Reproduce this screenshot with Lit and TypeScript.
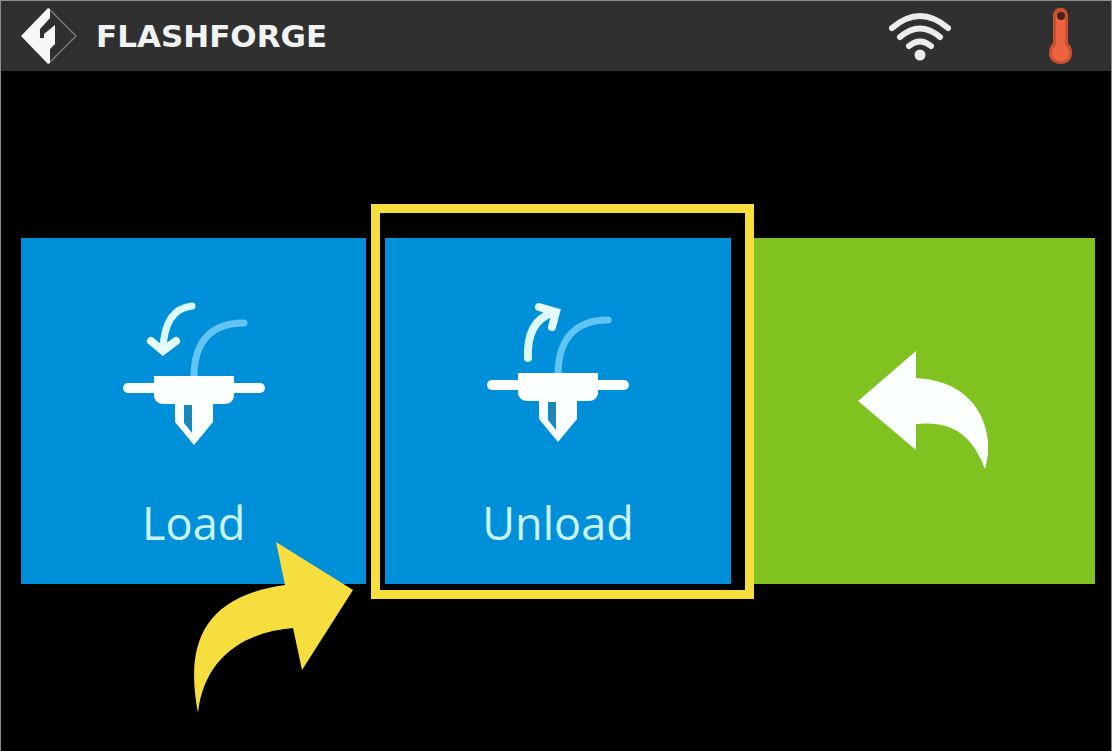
import { LitElement, html, css, svg } from "lit";
import { customElement, property } from "lit/decorators.js";

const nozzle = svg`
  <path d="M6 87H138" stroke="#fbfffe" stroke-width="10" stroke-linecap="round" />
  <path d="M32 75H112V96Q110 103 103 103H41Q34 103 32 96Z" fill="#fbfffe" />
  <path fill-rule="evenodd" fill="#fbfffe"
    d="M53 101H91V121L72 144L53 121ZM62 104V122L70 132V104Z" />
  <path d="M64 104H69V128L64 122Z" fill="#2a83a8" />
`;

const loadIcon = html`
  <svg class="icon" viewBox="0 0 144 144" fill="none" aria-hidden="true">
    <path d="M72 76C72 44 86 22 122 22" stroke="#62c4f4" stroke-width="7" stroke-linecap="round" />
    <path d="M70 5C50 7 42 24 41 48" stroke="#dcfbfc" stroke-width="7" stroke-linecap="round" />
    <path d="M29 40L41 50L54 40" stroke="#e6fdfd" stroke-width="8" stroke-linecap="round" />
    ${nozzle}
  </svg>
`;

const unloadIcon = html`
  <svg class="icon" viewBox="0 0 144 144" fill="none" aria-hidden="true">
    <path d="M72 74C72 42 86 19 122 19" stroke="#62c4f4" stroke-width="7" stroke-linecap="round" />
    <path d="M42 57C41 34 48 18 66 12" stroke="#dcfbfc" stroke-width="8" stroke-linecap="round" />
    <path d="M53 6L70 11L66 26" stroke="#e6fdfd" stroke-width="8" stroke-linecap="round" />
    <g transform="translate(0 -3)">${nozzle}</g>
  </svg>
`;

const backIcon = html`
  <svg class="back-icon" viewBox="0 0 132 120" aria-hidden="true">
    <path fill="#fafffb"
      d="M2 50L60 0V27C102 29 128 53 132 90Q133 105 129 118C117 86 98 69 60 73V99Z" />
  </svg>
`;

@customElement("status-bar")
export class StatusBar extends LitElement {
  static styles = css`
    :host {
      display: block;
    }
    .bar {
      display: flex;
      align-items: center;
      height: 70px;
      padding: 0 36px 0 19px;
      background: #303030;
      color: #f1f2f2;
    }
    .mark {
      width: 58px;
      height: 58px;
      margin-right: 18px;
    }
    .brand {
      flex: 1;
      font: bold 31px/40px "DejaVu Sans", sans-serif;
    }
    .wifi {
      width: 66px;
      height: 52px;
      margin-right: 94px;
    }
    .thermo {
      width: 28px;
      height: 60px;
    }
  `;

  render() {
    return html`
      <header class="bar">
        <svg class="mark" viewBox="0 0 58 58" fill="none" aria-hidden="true">
          <path d="M29 2L56 29L29 56" stroke="#777" stroke-width="1.5" />
          <path fill="#f6f7f7"
            d="M1 29L28 1L30 2V11L20 22V31H24V27L35 18V37L30 42V56L28 57Z" />
        </svg>
        <span class="brand">FLASHFORGE</span>
        <svg class="wifi" viewBox="0 0 66 52" fill="none" stroke="#ececea" stroke-width="6"
          stroke-linecap="round" role="img" aria-label="Wi-Fi">
          <path d="M5 18Q33 -6 61 18" />
          <path d="M13 27Q33 10 53 27" />
          <path d="M22 36Q33 27 44 36" />
          <circle cx="33" cy="45" r="5.5" fill="#ececea" stroke="none" />
        </svg>
        <svg class="thermo" viewBox="0 0 28 60" role="img" aria-label="Temperature">
          <path fill="#c9512f"
            d="M6 10C6 -1 21 -1 21 10V37Q25 41 25 47C25 54 20 58 14 58C7 58 2 54 2 47Q2 41 6 37Z" />
          <path fill="#ed6340" d="M9 9H18V39Q22 42 22 47C22 53 18 55 14 55S5 53 5 47Q5 42 9 39Z" />
          <circle cx="14" cy="10" r="4" fill="#4b211b" />
        </svg>
      </header>
    `;
  }
}

@customElement("action-tile")
export class ActionTile extends LitElement {
  @property() label = "";
  @property() kind = "load";

  static styles = css`
    :host {
      display: block;
    }
    .tile {
      display: flex;
      flex-direction: column;
      align-items: center;
      gap: 48px;
      box-sizing: border-box;
      width: 100%;
      aspect-ratio: 1;
      margin: 0;
      padding: 63px 0 0;
      border: 0;
      border-radius: 0;
      background: #0090da;
      color: #c9f4fb;
      font: 45px/60px "Open Sans", "Noto Sans", sans-serif;
      cursor: pointer;
    }
    .back {
      justify-content: center;
      padding: 0;
      background: #80c220;
    }
    .icon {
      width: 144px;
      height: 144px;
      overflow: visible;
    }
    .back-icon {
      width: 132px;
      height: 120px;
    }
  `;

  render() {
    if (this.kind === "back") {
      return html`<button class="tile back" type="button" aria-label="Back">${backIcon}</button>`;
    }
    return html`
      <button class="tile" type="button">
        ${this.kind === "load" ? loadIcon : unloadIcon}
        <span>${this.label}</span>
      </button>
    `;
  }
}

@customElement("app-root")
export class AppRoot extends LitElement {
  static styles = css`
    :host {
      display: block;
    }
    .screen {
      display: flex;
      flex-direction: column;
      box-sizing: border-box;
      min-height: 100vh;
      border: 1px solid #8c8e8e;
      border-bottom: 0;
      background: #000;
    }
    .actions {
      flex: 1;
      display: grid;
      grid-template-columns: repeat(3, 1fr);
      align-content: center;
      gap: 19px;
      padding: 0 16px 0 20px;
    }
    .cell {
      position: relative;
    }
    .marked {
      z-index: 1;
    }
    .frame {
      position: absolute;
      inset: -34px -23px -15px -14px;
      border: 9px solid #f6de3e;
      pointer-events: none;
    }
    .pointer {
      position: absolute;
      right: 12px;
      bottom: -130px;
      width: 162px;
      height: 172px;
      pointer-events: none;
    }
  `;

  render() {
    return html`
      <div class="screen">
        <status-bar></status-bar>
        <main class="actions">
          <div class="cell">
            <action-tile kind="load" label="Load"></action-tile>
            <svg class="pointer" viewBox="0 0 162 172" aria-hidden="true">
              <path fill="#f6de3e"
                d="M84 0L161 48L110 128L101 86C52 90 12 116 6 171C-6 108 6 55 93 43Z" />
            </svg>
          </div>
          <div class="cell marked">
            <action-tile kind="unload" label="Unload"></action-tile>
            <div class="frame"></div>
          </div>
          <div class="cell">
            <action-tile kind="back"></action-tile>
          </div>
        </main>
      </div>
    `;
  }
}
